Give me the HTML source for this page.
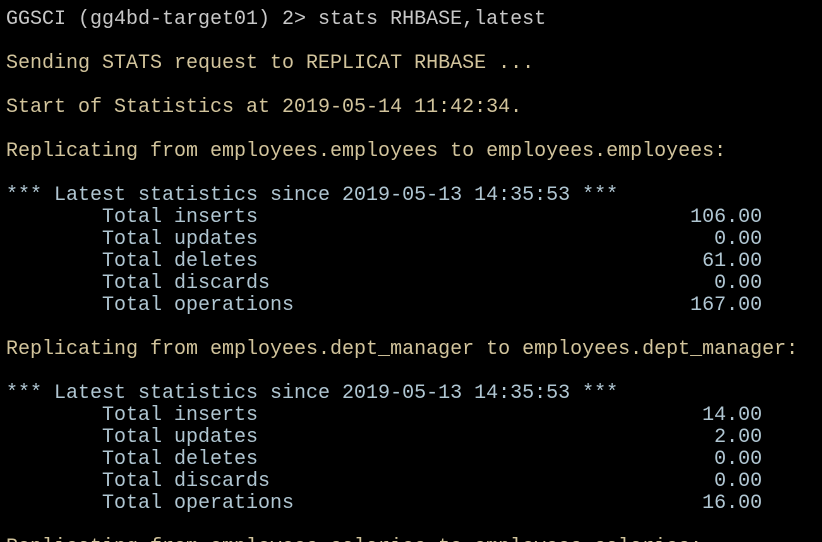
<!DOCTYPE html>
<html><head><meta charset="utf-8"><style>
html,body{margin:0;padding:0;background:#000;width:822px;height:542px;overflow:hidden}
pre{margin:0;padding:9px 0 0 6px;font-family:"Liberation Mono",monospace;font-size:20px;line-height:22px;color:#c0c0c0;white-space:pre}
.w{color:#c8c8c8}.t{color:#d2c49c}.b{color:#b0c6d2}
</style></head><body><pre><span class="w">GGSCI (gg4bd-target01) 2&gt; stats RHBASE,latest</span>

<span class="t">Sending STATS request to REPLICAT RHBASE ...</span>

<span class="t">Start of Statistics at 2019-05-14 11:42:34.</span>

<span class="t">Replicating from employees.employees to employees.employees:</span>

<span class="b">*** Latest statistics since 2019-05-13 14:35:53 ***
        Total inserts                                    106.00
        Total updates                                      0.00
        Total deletes                                     61.00
        Total discards                                     0.00
        Total operations                                 167.00</span>

<span class="t">Replicating from employees.dept_manager to employees.dept_manager:</span>

<span class="b">*** Latest statistics since 2019-05-13 14:35:53 ***
        Total inserts                                     14.00
        Total updates                                      2.00
        Total deletes                                      0.00
        Total discards                                     0.00
        Total operations                                  16.00</span>

<span class="t">Replicating from employees.salaries to employees.salaries:</span>
</pre></body></html>
